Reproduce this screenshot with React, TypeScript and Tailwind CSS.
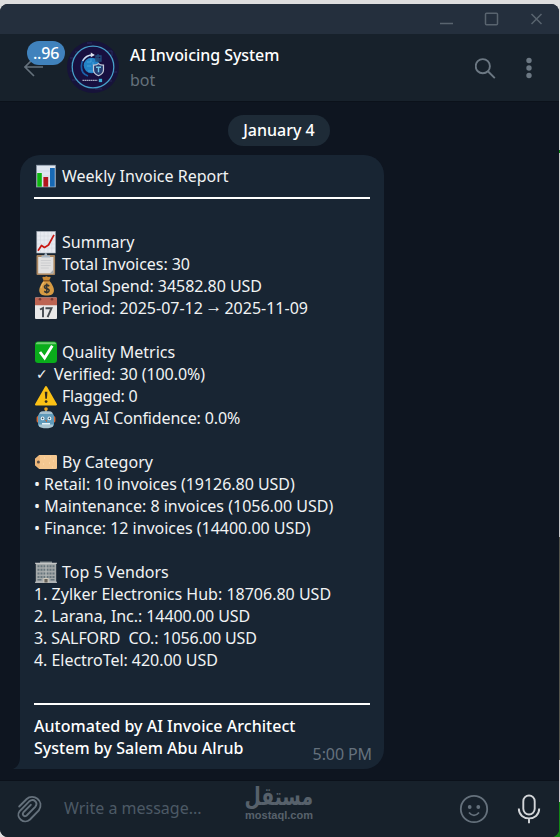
import React from "react";

type EmojiName =
  | "bars" | "trend" | "clipboard" | "money" | "calendar"
  | "check" | "warning" | "robot" | "tag" | "office";

function Emoji({ name }: { name: EmojiName }) {
  return (
    <svg viewBox="0 0 24 22" className="h-[22px] w-6 shrink-0 overflow-visible">
      {name === "bars" && (
        <>
          <rect x="2.5" y="0.2" width="19" height="21.8" fill="#dfe6ef" stroke="#8b98a8" strokeWidth=".7" />
          <path d="M3 6h18M3 11h18M3 16h18" stroke="#c3ccd9" strokeWidth=".5" />
          <rect x="3.2" y="8" width="4.6" height="13.7" fill="#0db510" />
          <rect x="9.4" y="12" width="4.8" height="9.7" fill="#b3151c" />
          <rect x="16" y="3" width="4.8" height="18.7" fill="#1769b5" />
        </>
      )}
      {name === "trend" && (
        <>
          <rect x="2.8" y="0.4" width="18.6" height="21.6" fill="#e8ebf1" stroke="#a4adb8" strokeWidth=".6" />
          <path d="M6.5 1v21M10.2 1v21M14 1v21M17.7 1v21M3 5h18M3 9h18M3 13h18M3 17h18" stroke="#d0d6df" strokeWidth=".5" />
          <path d="M4 19.8 7.5 14.5 10.5 16.5 14.5 14 20 3.8" fill="none" stroke="#c81914" strokeWidth="1.7" strokeLinejoin="round" />
        </>
      )}
      {name === "clipboard" && (
        <>
          <rect x="2.5" y="2" width="18.6" height="20" rx="1" fill="#a98660" />
          <path d="M4.2 4h15.2v16.4H4.2z" fill="#e0e0e0" />
          <path d="m15.8 20.4 3.6-3.6v3.6z" fill="#a4a9ae" />
          <path d="M7.5 4.4V2.4h2.7q.4-2.4 1.6-2.4t1.6 2.4h2.7v2z" fill="#a7b5c2" />
          <path d="M6.8 7.5h10M6.8 10h10M6.8 12.5h10M6.8 15h8" stroke="#c9cbcd" strokeWidth=".9" />
        </>
      )}
      {name === "money" && (
        <g transform="translate(2.9 1.2) scale(.8 .88)">
          <path d="M8.5 5 6.7 1.5q1.5-1.7 3.3-.5 2-1.8 3.8 0 2-1.2 3.5.4L15.2 5z" fill="#c98a36" />
          <path d="M8.8 5h6.3c3 2.8 6.2 7.5 6.2 11.2 0 4.2-3.7 5.8-9.2 5.8S3 20.3 3 16.2C3 12.5 6 7.8 8.8 5z" fill="#d79b43" />
          <path d="M5 13.5Q6 9 9.2 6.4" fill="none" stroke="#efbd6d" strokeWidth="1.3" />
          <path d="M8.2 5.2h7.6" stroke="#8b541d" strokeWidth="1.6" />
          <path d="M15.5 11.2q-2.8-1.8-5.3-.4c-1.8 1.4-.5 2.8 2.1 3.3 3.3.7 3.6 2.3 2.4 3.4-1.3 1.1-4 .6-5.6-.4M12.3 8.2v11.5" fill="none" stroke="#353533" strokeWidth="1.8" />
        </g>
      )}
      {name === "calendar" && (
        <>
          <rect x="1" y="0.4" width="22" height="21.5" rx="1" fill="#e9e9e9" />
          <path d="M2 .4h20q1 0 1 1v6.8H1V1.4q0-1 1-1z" fill="#bd6452" />
          <circle cx="6" cy="2.2" r="1.3" fill="#793b35" /><circle cx="18" cy="2.2" r="1.3" fill="#793b35" />
          <path d="m6 12.5 3-1.4v9.2M11.5 11.2h6L13.6 20.2" fill="none" stroke="#464b50" strokeWidth="1.9" />
        </>
      )}
      {name === "check" && (
        <>
          <rect x="1" y="0.5" width="22" height="21.5" rx="3.2" fill="#0aad1b" />
          <path d="M3.5 1.2h17q1.7.4 1.8 2H1.8q.1-1.6 1.7-2" fill="#73cc75" />
          <path d="m6 11 4.6 6L18.3 4.7" fill="none" stroke="#fff" strokeWidth="2.8" />
        </>
      )}
      {name === "warning" && (
        <>
          <path d="M12 2 22 19.4H2z" fill="#fbc115" stroke="#fbc115" strokeWidth="2" strokeLinejoin="round" />
          <path d="M10.8 6.7h2.6l-.5 7h-1.6z" fill="#322a20" /><circle cx="12.1" cy="16.6" r="1.4" fill="#322a20" />
        </>
      )}
      {name === "robot" && (
        <>
          <path d="M12 2v4" stroke="#91a5b0" strokeWidth="1.6" /><circle cx="12" cy="2" r="1.8" fill="#f1a51c" />
          <path d="M5 8q0-3.8 4-3.8h6Q19 4.2 19 8z" fill="#a7c2d0" />
          <rect x="2.6" y="9" width="18.8" height="6.6" rx="1.7" fill="#d86835" />
          <rect x="4" y="7" width="16" height="12.5" rx="2" fill="#609ab9" />
          <path d="M5 17.6h14v1.9q-2 1.8-7 1.8t-7-1.8z" fill="#a9c4d0" />
          <circle cx="8.6" cy="11.4" r="1.9" fill="#e8f2f6" /><circle cx="15.4" cy="11.4" r="1.9" fill="#e8f2f6" />
          <circle cx="8.6" cy="11.4" r=".8" fill="#354b59" /><circle cx="15.4" cy="11.4" r=".8" fill="#354b59" />
          <path d="M11.5 13.4h1v1.3" stroke="#d86835" /><path d="M8 16.8h8" stroke="#eff8fb" strokeWidth="1.5" />
        </>
      )}
      {name === "tag" && (
        <>
          <path d="M5.2 4H22q1 0 1 1v12q0 1-1 1H5.2L1 14.2V7.8z" fill="#f4c891" />
          <path d="M1.2 8.3 5.8 4v14l-4.6-4.2z" fill="#edb577" />
          <circle cx="4.4" cy="11" r="1.5" fill="#5d5147" />
          <path d="M10 7h1m5-1h1m2 4h1m-5 2h1m-7 1h1m8 3h1" stroke="#ffdcae" />
        </>
      )}
      {name === "office" && (
        <>
          <path d="M6 .5h12v2H6z" fill="#7e898d" />
          <rect x="1.8" y="2" width="20.4" height="19.5" fill="#a4a9aa" />
          <path d="M1 2.2h22M1 21.2h22" stroke="#cdd0cf" strokeWidth="1.1" />
          <path d="M3.5 5.2h17M3.5 8.8h17M3.5 12.4h17M3.5 16h17" stroke="#66757c" strokeWidth="2" strokeDasharray="2 1" />
          <path d="M3.5 18.8h4M16.5 18.8h4" stroke="#66757c" strokeWidth="1.5" />
          <path d="M9.4 17h5.2v4.5H9.4z" fill="#d0cabc" /><path d="M10.4 18h3.2v3.5h-3.2z" fill="#65615a" />
          <path d="M12 3v14" stroke="#bfc3c1" strokeWidth=".7" />
        </>
      )}
    </svg>
  );
}

function Line({ icon, className = "", children }: { icon?: EmojiName; className?: string; children?: React.ReactNode }) {
  return (
    <div className={`flex h-[22px] items-center whitespace-pre leading-[22px] ${className}`}>
      {icon && <span className="mr-1 flex"><Emoji name={icon} /></span>}
      {children}
    </div>
  );
}

function Rule() {
  return <div className="flex h-[22px] items-center"><div className="h-0.5 w-[336px] bg-white" /></div>;
}

function BotAvatar() {
  return (
    <svg viewBox="0 0 52 52" className="size-[52px] shrink-0">
      <circle cx="26" cy="26" r="26" fill="#17133a" />
      <path d="M3 17h6v5H4m-1 8h7v5M5 39h8v5m26-4h6m-5-30h5v5m-1 16h6M8 11h5v4M20 2h5m10 46h-7" fill="none" stroke="#292b5c" strokeWidth="1" />
      <circle cx="26" cy="26" r="20.8" fill="#181040" stroke="#469fc8" strokeWidth="1.3" />
      <circle cx="24.5" cy="24.5" r="7.8" fill="#2382c6" />
      <path d="M20 21h4v-3m-3 12h5m-6-5h4m2-4v3" fill="none" stroke="#4da6dc" strokeWidth=".8" />
      <path d="M21 35C12 32 12 18 22 14.7q3-1 5-.7" fill="none" stroke="#1a5fa8" strokeWidth="1.7" />
      <path d="M15.6 20q3.4-6 9.4-6" fill="none" stroke="#d4d8e9" strokeWidth="1.3" />
      <path d="m23.8 11.5 4 2.4-4 2.3z" fill="#e1e4ee" />
      <path d="M29 15v5h5v-5zm2-2v7m3-2h-6" fill="none" stroke="#22507f" strokeWidth="1.3" />
      <path d="M26.5 24.2q3 .2 5-1.6 2 1.8 5 1.6v4.5q0 4-5 6-5-2-5-6z" fill="#253f75" stroke="#c3c9d7" strokeWidth="1.2" />
      <path d="M29 26.3h5M31.5 26.3v5" stroke="#74c8e7" strokeWidth="1.4" />
      <path d="M15.5 39.4h15" stroke="#a5a9bf" strokeWidth="1.2" strokeDasharray="1.7 .4" />
      <rect x="31.8" y="37.8" width="3.3" height="3.3" fill="#3eadd6" />
    </svg>
  );
}

export default function App() {
  return (
    <div className="h-[837px] w-[560px] overflow-hidden bg-[linear-gradient(90deg,#dedede_50%,transparent_50%),linear-gradient(#dedede_0_150px,#128514_150px_153px,#cbcbcb_153px_537px,#55564d_537px_760px,#cbcbcb_760px_802px,#128514_802px)] pt-1 font-['Noto_Sans','DejaVu_Sans',sans-serif] text-base text-[#f1f3f4]">
      <div className="flex h-[833px] w-[559px] flex-col overflow-hidden rounded-[8px] bg-[#0e1520]">
        <div className="flex h-[30px] shrink-0 justify-end bg-[#242f3d]">
          <svg viewBox="0 0 140 30" className="h-[30px] w-[140px]" fill="none" stroke="#59646f" strokeWidth="1.5">
            <path d="M21 19.5h13M112.5 10l10 10m0-10-10 10" />
            <rect x="66.5" y="9.2" width="12" height="11.5" rx="1" />
          </svg>
        </div>

        <header className="flex h-[68px] shrink-0 items-center border-b border-[#0b111a] bg-[#17212b] pb-px">
          <div className="relative ml-6 flex h-[52px] w-[43px] items-center">
            <svg viewBox="0 0 20 20" className="size-5" fill="none" stroke="#65717c" strokeWidth="1.6">
              <path d="M19 10H2m8-9-9 9 9 9" />
            </svg>
            <div className="absolute left-[3px] top-0 flex h-6 w-[38px] items-center justify-center rounded-full bg-[#4082bc] text-base font-medium tracking-[-0.2px] text-white">..96</div>
          </div>
          <BotAvatar />
          <div className="ml-[11px] flex grow flex-col whitespace-nowrap pt-0.5">
            <div className="h-[25px] text-base font-medium leading-[25px] tracking-[-0.05px] text-white">AI Invoicing System</div>
            <div className="h-[25px] leading-[25px] text-[#65717c]">bot</div>
          </div>
          <svg viewBox="0 0 80 40" className="mr-1 mt-0.5 h-10 w-20" fill="none" stroke="#6c7883" strokeWidth="1.9">
            <circle cx="7.8" cy="18.2" r="7.1" /><path d="m12.9 23.3 6.9 6.8" />
            <g fill="#6c7883" stroke="none"><circle cx="54" cy="12.5" r="2.7" /><circle cx="54" cy="20" r="2.7" /><circle cx="54" cy="27.5" r="2.7" /></g>
          </svg>
        </header>

        <main className="flex grow flex-col">
          <div className="ml-[228px] mt-[13px] flex h-[31px] w-[102px] items-center justify-center whitespace-nowrap rounded-full bg-[#1e2b37] pb-0.5 font-medium text-white">January 4</div>
          <section className="relative ml-5 mt-[9px] h-[614px] w-[364px] rounded-[20px] rounded-bl-none bg-[#182533] px-[14px] pt-[10px]">
            <Line icon="bars">Weekly Invoice Report</Line>
            <Rule />
            <Line />
            <Line icon="trend">Summary</Line>
            <Line icon="clipboard" className="tracking-[-0.05px]">Total Invoices: 30</Line>
            <Line icon="money" className="tracking-[-0.04px]">Total Spend: 34582.80 USD</Line>
            <Line icon="calendar">Period: 2025-07-12<span className="w-[21.5px] pb-0.5 text-center font-['Liberation_Serif',serif] text-[17px]">→</span>2025-11-09</Line>
            <Line />
            <Line icon="check">Quality Metrics</Line>
            <Line className="tracking-[-0.06px]"><span className="w-5 pl-0.5 font-['DejaVu_Sans',sans-serif] text-[14px]">✓</span>Verified: 30 (100.0%)</Line>
            <Line icon="warning" className="tracking-[-0.2px]">Flagged: 0</Line>
            <Line icon="robot" className="tracking-[-0.14px]">Avg AI Confidence: 0.0%</Line>
            <Line />
            <Line icon="tag">By Category</Line>
            <Line className="tracking-[-0.03px]">• Retail: 10 invoices (19126.80 USD)</Line>
            <Line>• Maintenance: 8 invoices (1056.00 USD)</Line>
            <Line className="tracking-[-0.03px]">• Finance: 12 invoices (14400.00 USD)</Line>
            <Line />
            <Line icon="office">Top 5 Vendors</Line>
            <Line>1. Zylker Electronics Hub: 18706.80 USD</Line>
            <Line className="tracking-[-0.06px]">2. Larana, Inc.: 14400.00 USD</Line>
            <Line className="tracking-[-0.1px]">3. SALFORD  CO.: 1056.00 USD</Line>
            <Line className="tracking-[-0.04px]">4. ElectroTel: 420.00 USD</Line>
            <Line />
            <Rule />
            <div className="font-medium tracking-[0.03px] text-white">
              <Line>Automated by AI Invoice Architect</Line>
              <Line>System by Salem Abu Alrub</Line>
            </div>
            <time className="absolute bottom-1 right-3 text-base leading-[22px] tracking-[-0.1px] text-[#65717d]">5:00 PM</time>
            <svg viewBox="0 0 8 18" className="absolute -left-[7px] bottom-0 h-[18px] w-2"><path d="M8 0v18H0q7-3 7-12V0z" fill="#182533" /></svg>
          </section>
        </main>

        <footer className="flex h-[57px] shrink-0 items-center border-t border-[#0b111a] bg-[#17212b]">
          <svg viewBox="0 0 26 28" className="ml-[17px] h-7 w-[26px]" fill="none" stroke="#65717c" strokeWidth="1.9" strokeLinecap="round">
            <path d="M2.2 11.5 9.7 4C16-2 28 5.8 21.8 15.5L13 24.5C7 30-2 22.5 2.7 16L12 6.6c5-3.8 9.5 1 6.2 5.2l-8.5 8.7c-3 2-5-1-3.3-3.2l7.4-7.5" />
          </svg>
          <div className="-mt-[3px] ml-[21px] w-[181px] whitespace-nowrap text-[#4c5965]">Write a message...</div>
          <div className="-mt-[14px] flex w-[68px] flex-col items-center text-[#57616b]">
            <div dir="rtl" className="h-[25px] scale-x-[.75] whitespace-nowrap font-['DejaVu_Sans',sans-serif] text-[25px] font-bold leading-[26px]">مستقل</div>
            <div className="h-3 font-['Liberation_Sans',sans-serif] text-[11px] font-bold leading-3">mostaql.com</div>
          </div>
          <svg viewBox="0 0 30 30" className="ml-[146px] size-[30px]" fill="none" stroke="#65717c" strokeWidth="1.8">
            <circle cx="15" cy="15" r="13.2" /><path d="M10 18.5q5 5.8 10 0" />
            <circle cx="10.7" cy="13" r="1.9" fill="#65717c" stroke="none" /><circle cx="19.3" cy="13" r="1.9" fill="#65717c" stroke="none" />
          </svg>
          <svg viewBox="0 0 24 30" className="ml-[28px] h-[30px] w-6" fill="none" stroke="#d3d6d9" strokeWidth="1.9">
            <rect x="6.3" y="1.5" width="11.4" height="19" rx="5.7" /><path d="M1.8 14.5c0 13.2 20.4 13.2 20.4 0M12 24.3v5" />
          </svg>
        </footer>
      </div>
    </div>
  );
}
